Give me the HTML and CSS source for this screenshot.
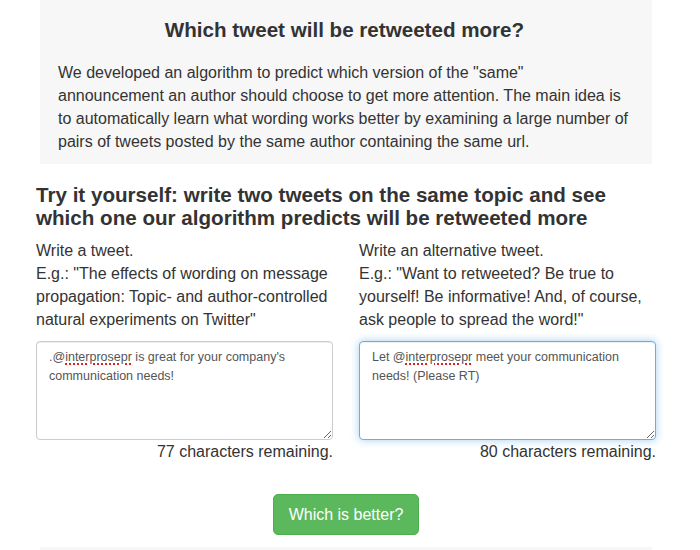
FILE: index.html
```html
<!DOCTYPE html>
<html lang="en">
<head>
<meta charset="utf-8">
<title>Which tweet will be retweeted more?</title>
<link rel="stylesheet" href="styles.css">
</head>
<body>
<div class="page">
  <section class="jumbo">
    <h1 class="jumbo-title">Which tweet will be retweeted more?</h1>
    <p class="jumbo-text">We developed an algorithm to predict which version of the "same" announcement an author should choose to get more attention. The main idea is to automatically learn what wording works better by examining a large number of pairs of tweets posted by the same author containing the same url.</p>
  </section>

  <h3 class="try-title">Try it yourself: write two tweets <strong>on the same topic</strong> and see which one our algorithm predicts will be retweeted more</h3>

  <div class="cols">
    <div class="col">
      <p class="prompt">Write a tweet.<br>E.g.: "The effects of wording on message propagation: Topic- and author-controlled natural experiments on Twitter"</p>
      <div class="tweet-box">.@<span class="misspelt">interprosepr</span> is great for your company's communication needs!</div>
      <p class="count">77 characters remaining.</p>
    </div>
    <div class="col">
      <p class="prompt">Write an alternative tweet.<br>E.g.: "Want to retweeted? Be true to yourself! Be informative! And, of course, ask people to spread the word!"</p>
      <div class="tweet-box focused">Let @<span class="misspelt">interprosepr</span> meet your communication needs! (Please RT)</div>
      <p class="count">80 characters remaining.</p>
    </div>
  </div>

  <div class="actions">
    <button class="btn-success" type="button">Which is better?</button>
  </div>

  <div class="band"></div>
</div>
</body>
</html>
```

FILE: styles.css
```css
html, body {
  margin: 0;
  padding: 0;
  background: #ffffff;
}

body {
  font-family: "Liberation Sans", Arial, Helvetica, sans-serif;
  font-size: 16px;
  color: #333333;
}

.page {
  width: 620px;
  margin-left: 36px;
}

.jumbo {
  margin: 0 4px;
  background: #f7f7f7;
  padding: 18px 21px 11px 18px;
}

.jumbo-title {
  margin: 0;
  font-size: 20.6px;
  line-height: 24px;
  font-weight: bold;
  text-align: center;
}

.jumbo-text {
  margin: 19px 0 0;
  line-height: 23px;
}

.try-title {
  margin: 19px 0 10px;
  font-size: 20.6px;
  line-height: 23px;
  font-weight: bold;
}

.try-title strong {
  font-weight: bold;
}

.cols {
  display: grid;
  grid-template-columns: 297px 297px;
  column-gap: 26px;
}

.prompt {
  margin: 0 0 10px;
  line-height: 23px;
}

.tweet-box {
  box-sizing: border-box;
  height: 99px;
  border: 1px solid #cccccc;
  border-radius: 4px;
  padding: 6px 12px;
  font-size: 12.5px;
  line-height: 18.6px;
  color: #555555;
  background: #ffffff;
  box-shadow: inset 0 1px 1px rgba(0, 0, 0, 0.075);
  resize: vertical;
  overflow: auto;
}

.tweet-box.focused {
  border-color: #66afe9;
  box-shadow: inset 0 1px 1px rgba(0, 0, 0, 0.075), 0 0 8px rgba(102, 175, 233, 0.6);
}

.misspelt {
  text-decoration: underline dotted #e0211d;
  text-decoration-thickness: 2px;
  text-underline-offset: 2px;
}

.count {
  margin: 0;
  line-height: 23px;
  text-align: right;
}

.actions {
  display: flex;
  justify-content: center;
  margin-top: 31px;
}

.btn-success {
  font-family: "Liberation Sans", Arial, Helvetica, sans-serif;
  font-size: 16px;
  line-height: 23px;
  color: #ffffff;
  background: #5cb85c;
  border: 1px solid #4cae4c;
  border-radius: 5px;
  padding: 8px 15px;
  cursor: pointer;
}

.band {
  margin: 12px 4px 0;
  height: 20px;
  background: #f7f7f7;
}
```
